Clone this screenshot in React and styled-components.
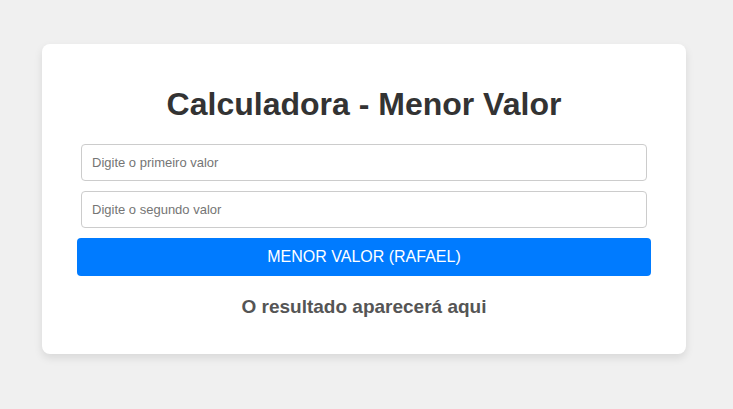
import React, { useState } from "react";
import styled, { createGlobalStyle } from "styled-components";

const GlobalStyle = createGlobalStyle`
  body {
    margin: 0;
    background: #f0f0f0;
    font-family: Arial, "Liberation Sans", sans-serif;
  }
`;

const Page = styled.main`
  display: flex;
  justify-content: center;
  align-items: center;
  box-sizing: border-box;
  min-height: 100vh;
  padding: 32px 47px 44px 42px;
`;

const Card = styled.form`
  box-sizing: border-box;
  width: 100%;
  padding: 40px 35px 36px;
  border-radius: 8px;
  background: #fff;
  box-shadow: 0 4px 8px rgba(0, 0, 0, 0.1);
  text-align: center;
`;

const Title = styled.h1`
  margin: 0 0 20px;
  color: #333;
  font-size: 32px;
  line-height: 40px;
`;

const Field = styled.input`
  display: block;
  box-sizing: border-box;
  width: calc(100% - 8px);
  height: 37px;
  margin: 0 4px 10px;
  padding: 10px;
  border: 1px solid #ccc;
  border-radius: 4px;
  font-family: inherit;
  font-size: 13px;

  &::placeholder {
    color: #757575;
  }
`;

const SubmitButton = styled.button`
  display: block;
  width: 100%;
  padding: 10px;
  border: 0;
  border-radius: 4px;
  background: #007bff;
  color: #fff;
  font-family: inherit;
  font-size: 16px;
  line-height: 18px;
  cursor: pointer;
`;

const Result = styled.output`
  display: block;
  margin-top: 20px;
  color: #555;
  font-size: 19px;
  font-weight: bold;
  line-height: 22px;
`;

export default function App() {
  const [first, setFirst] = useState("");
  const [second, setSecond] = useState("");
  const [result, setResult] = useState("O resultado aparecerá aqui");

  const calculate = (event) => {
    event.preventDefault();
    const values = [parseFloat(first), parseFloat(second)];
    setResult(
      values.some(Number.isNaN)
        ? "Digite dois valores válidos"
        : `O menor valor é ${Math.min(...values)}`
    );
  };

  return (
    <>
      <GlobalStyle />
      <Page>
        <Card onSubmit={calculate}>
          <Title>Calculadora - Menor Valor</Title>
          <Field
            type="text"
            inputMode="decimal"
            aria-label="Primeiro valor"
            placeholder="Digite o primeiro valor"
            value={first}
            onChange={(event) => setFirst(event.target.value)}
          />
          <Field
            type="text"
            inputMode="decimal"
            aria-label="Segundo valor"
            placeholder="Digite o segundo valor"
            value={second}
            onChange={(event) => setSecond(event.target.value)}
          />
          <SubmitButton type="submit">MENOR VALOR (RAFAEL)</SubmitButton>
          <Result>{result}</Result>
        </Card>
      </Page>
    </>
  );
}
